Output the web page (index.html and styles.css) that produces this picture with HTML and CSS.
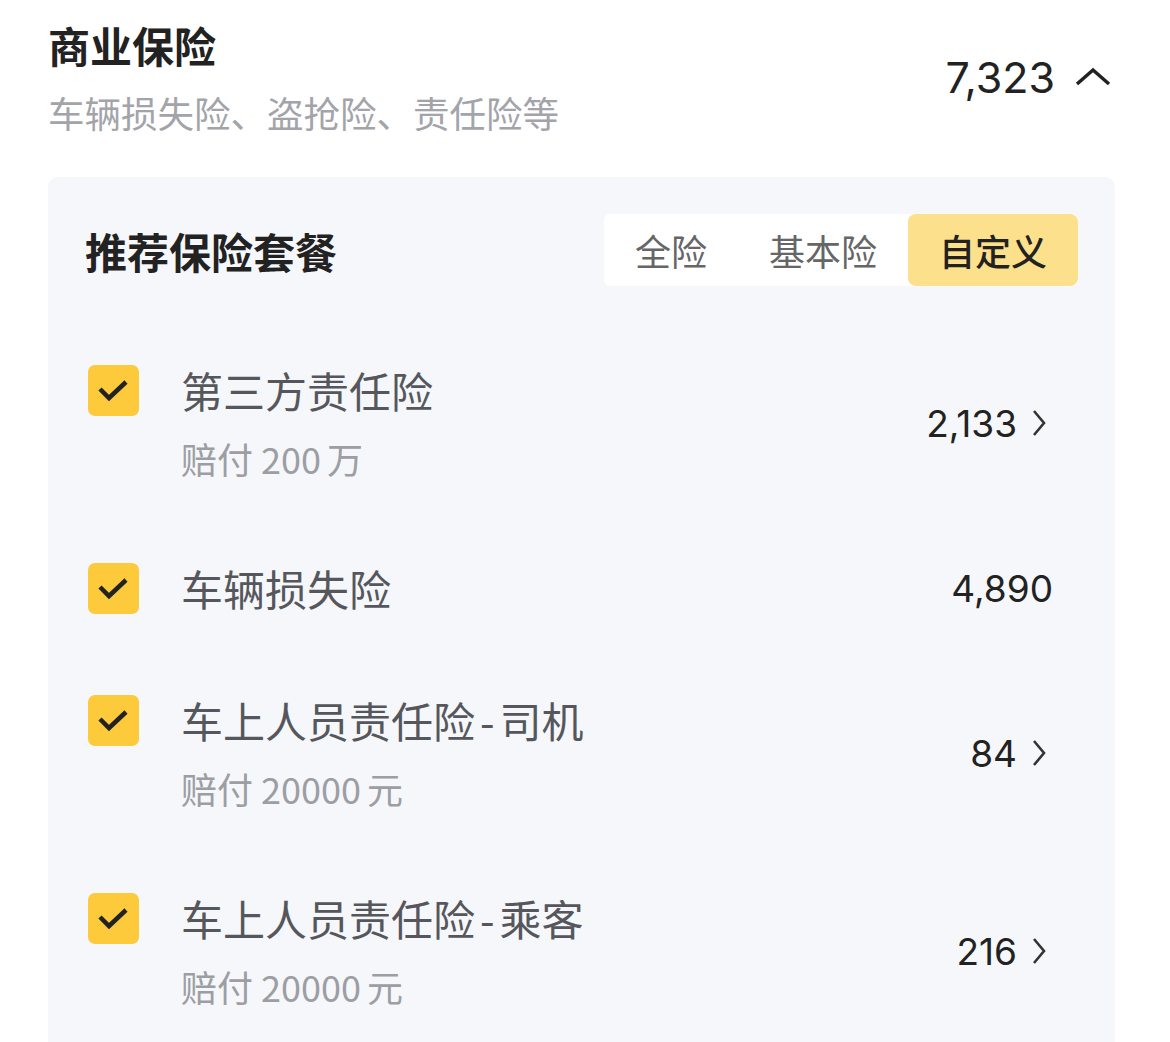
FILE: index.html
```html
<!DOCTYPE html>
<html lang="zh-CN">
<head>
    <meta charset="UTF-8">
    <meta name="viewport" content="width=device-width, initial-scale=1.0">
    <title>商业保险</title>
    <link rel="stylesheet" href="styles.css">
</head>
<body>
    <div class="page">
        <div class="section-head">
            <div class="head-text">
                <h1 class="head-title">商业保险</h1>
                <p class="head-desc">车辆损失险、盗抢险、责任险等</p>
            </div>
            <div class="head-total">
                <span class="num total-num">7,323</span>
                <svg class="arrow-up" width="36" height="20" viewBox="0 0 36 20">
                    <path d="M2 17 L18 3 L34 17" fill="none" stroke="#222" stroke-width="3.5"/>
                </svg>
            </div>
        </div>

        <div class="card">
            <div class="card-head">
                <h2 class="card-title">推荐保险套餐</h2>
                <div class="tabs">
                    <button class="tab">全险</button>
                    <button class="tab">基本险</button>
                    <button class="tab active">自定义</button>
                </div>
            </div>

            <ul class="items">
                <li class="item">
                    <span class="check">
                        <svg width="51" height="51" viewBox="0 0 51 51"><path d="M12 24 L21 33 L38 17" fill="none" stroke="#222" stroke-width="4.5"/></svg>
                    </span>
                    <div class="item-text">
                        <div class="item-name">第三方责任险</div>
                        <div class="item-desc">赔付 200<span class="unit">万</span></div>
                    </div>
                    <div class="item-price">
                        <span class="num">2,133</span>
                        <svg class="arrow-right" width="20" height="26" viewBox="0 0 20 26"><path d="M1 1 L11 13 L1 25" fill="none" stroke="#333" stroke-width="2.6"/></svg>
                    </div>
                </li>
                <li class="item">
                    <span class="check">
                        <svg width="51" height="51" viewBox="0 0 51 51"><path d="M12 24 L21 33 L38 17" fill="none" stroke="#222" stroke-width="4.5"/></svg>
                    </span>
                    <div class="item-text">
                        <div class="item-name">车辆损失险</div>
                    </div>
                    <div class="item-price">
                        <span class="num">4,890</span>
                    </div>
                </li>
                <li class="item">
                    <span class="check">
                        <svg width="51" height="51" viewBox="0 0 51 51"><path d="M12 24 L21 33 L38 17" fill="none" stroke="#222" stroke-width="4.5"/></svg>
                    </span>
                    <div class="item-text">
                        <div class="item-name">车上人员责任险<span class="dash">-</span>司机</div>
                        <div class="item-desc">赔付 20000<span class="unit">元</span></div>
                    </div>
                    <div class="item-price">
                        <span class="num">84</span>
                        <svg class="arrow-right" width="20" height="26" viewBox="0 0 20 26"><path d="M1 1 L11 13 L1 25" fill="none" stroke="#333" stroke-width="2.6"/></svg>
                    </div>
                </li>
                <li class="item">
                    <span class="check">
                        <svg width="51" height="51" viewBox="0 0 51 51"><path d="M12 24 L21 33 L38 17" fill="none" stroke="#222" stroke-width="4.5"/></svg>
                    </span>
                    <div class="item-text">
                        <div class="item-name">车上人员责任险<span class="dash">-</span>乘客</div>
                        <div class="item-desc">赔付 20000<span class="unit">元</span></div>
                    </div>
                    <div class="item-price">
                        <span class="num">216</span>
                        <svg class="arrow-right" width="20" height="26" viewBox="0 0 20 26"><path d="M1 1 L11 13 L1 25" fill="none" stroke="#333" stroke-width="2.6"/></svg>
                    </div>
                </li>
            </ul>
        </div>
    </div>
</body>
</html>
```

FILE: styles.css
```css
/* styles.css */
html, body {
    margin: 0;
    height: 100%;
    overflow: hidden;
    background-color: #fff;
}

body {
    font-family: "Noto Sans CJK SC", "Noto Sans", sans-serif;
    color: #222;
}

.page {
    padding: 17px 55px 0 48px;
}

.section-head {
    display: flex;
    align-items: center;
    justify-content: space-between;
}

.head-title {
    margin: 0;
    font-size: 42px;
    line-height: 56px;
    font-weight: 700;
    color: #222;
}

.head-desc {
    margin: 16px 0 0;
    font-size: 36.5px;
    line-height: 48px;
    color: #a3a4aa;
}

.head-total {
    display: flex;
    align-items: center;
    gap: 20px;
    padding-right: 4px;
}

.num {
    font-family: Inter, Roboto, sans-serif;
}

.total-num {
    font-size: 43px;
    color: #222;
}

.arrow-up {
    display: block;
}

.card {
    margin-top: 40px;
    background-color: #f6f7fa;
    border-radius: 10px;
    padding: 37px 0 80px;
}

.card-head {
    display: flex;
    align-items: center;
    justify-content: space-between;
    padding: 0 37px;
}

.card-title {
    margin: 0;
    font-size: 42px;
    font-weight: 700;
    color: #222;
}

.tabs {
    display: flex;
    background-color: #fff;
    border-radius: 6px;
    height: 72px;
}

.tab {
    font-family: inherit;
    font-size: 36px;
    color: #666;
    background: none;
    border: none;
    padding: 0 31px;
    border-radius: 8px;
    cursor: pointer;
}

.tab.active {
    background-color: #fde08b;
    color: #222;
    font-weight: 500;
}

.items {
    list-style: none;
    margin: 78px 0 0;
    padding: 0 62px 0 40px;
    display: flex;
    flex-direction: column;
    gap: 80px;
}

.item {
    display: flex;
    align-items: center;
}

.check {
    align-self: flex-start;
    margin-top: 1px;
    width: 51px;
    height: 51px;
    border-radius: 7px;
    background-color: #fdca3b;
    display: block;
}

.check svg {
    display: block;
}

.item-text {
    flex: 1;
    margin-left: 42px;
}

.item-name {
    font-size: 42px;
    line-height: 52px;
    color: #55575d;
}

.dash {
    margin: 0 5px;
}

.item-desc {
    margin-top: 18px;
    font-size: 36px;
    line-height: 48px;
    color: #9c9ea4;
}

.unit {
    margin-left: 6px;
}

.item-price {
    display: flex;
    align-items: center;
    gap: 16px;
    font-size: 37px;
    color: #222;
}

.arrow-right {
    display: block;
}
```
